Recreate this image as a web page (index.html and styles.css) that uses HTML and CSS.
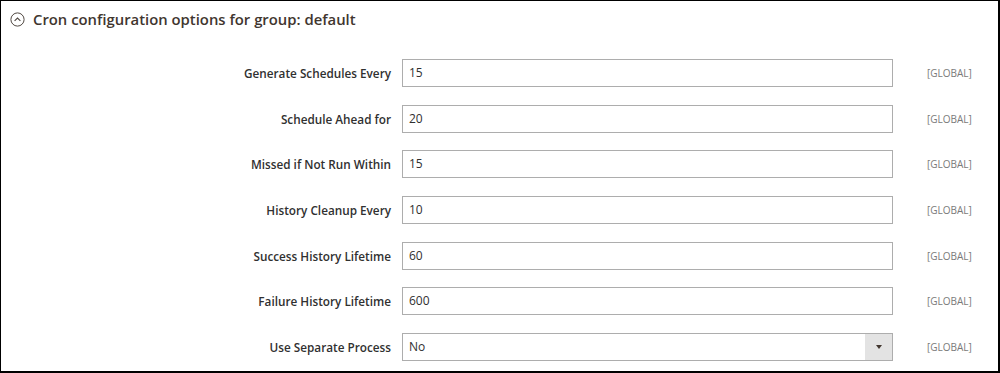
FILE: index.html
```html
<!DOCTYPE html>
<html>
<head>
<meta charset="utf-8">
<link rel="stylesheet" href="styles.css">
</head>
<body>
<div class="frame">
  <div class="section-head">
    <svg class="toggle" width="15" height="15" viewBox="0 0 15 15">
      <circle cx="7.5" cy="7.5" r="6.6" fill="none" stroke="#514943" stroke-width="1"/>
      <path d="M4.6 8.9 L7.5 6 L10.4 8.9" fill="none" stroke="#514943" stroke-width="1.1"/>
    </svg>
    <span class="title">Cron configuration options for group: default</span>
  </div>
  <div class="form">
    <div class="row">
      <label class="label">Generate Schedules Every</label>
      <div class="control"><div class="input">15</div></div>
      <div class="scope">[GLOBAL]</div>
    </div>
    <div class="row">
      <label class="label">Schedule Ahead for</label>
      <div class="control"><div class="input">20</div></div>
      <div class="scope">[GLOBAL]</div>
    </div>
    <div class="row">
      <label class="label">Missed if Not Run Within</label>
      <div class="control"><div class="input">15</div></div>
      <div class="scope">[GLOBAL]</div>
    </div>
    <div class="row">
      <label class="label">History Cleanup Every</label>
      <div class="control"><div class="input">10</div></div>
      <div class="scope">[GLOBAL]</div>
    </div>
    <div class="row">
      <label class="label">Success History Lifetime</label>
      <div class="control"><div class="input">60</div></div>
      <div class="scope">[GLOBAL]</div>
    </div>
    <div class="row">
      <label class="label">Failure History Lifetime</label>
      <div class="control"><div class="input">600</div></div>
      <div class="scope">[GLOBAL]</div>
    </div>
    <div class="row">
      <label class="label">Use Separate Process</label>
      <div class="control">
        <div class="input select"><span class="select-value">No</span><span class="arrow"><span class="tri"></span></span></div>
      </div>
      <div class="scope">[GLOBAL]</div>
    </div>
  </div>
</div>
</body>
</html>
```
FILE: styles.css
```css
html, body {
  margin: 0;
  padding: 0;
  background: #fff;
}
body {
  font-family: "Open Sans", "Liberation Sans", sans-serif;
  color: #303030;
}
.frame {
  box-sizing: border-box;
  width: 1000px;
  height: 373px;
  border-top: 1px solid #000;
  border-left: 1px solid #000;
  border-right: 2px solid #000;
  border-bottom: 2px solid #000;
  background: #fff;
  overflow: hidden;
}
.section-head {
  display: flex;
  align-items: center;
  height: 35px;
  padding-left: 9px;
  gap: 8px;
}
.toggle {
  display: block;
  margin-top: 2px;
}
.title {
  font-size: 14.85px;
  font-weight: 600;
  color: #41362f;
}
.form {
  display: flex;
  flex-direction: column;
  gap: 17.66px;
  margin-top: 23px;
}
.row {
  display: grid;
  grid-template-columns: 390px 491px auto;
  column-gap: 11px;
  align-items: center;
  height: 28px;
}
.label {
  text-align: right;
  font-size: 11.75px;
  font-weight: 600;
  color: #303030;
}
.control {
  height: 28px;
}
.input {
  box-sizing: border-box;
  height: 28px;
  border: 1px solid #adadad;
  padding: 0 6px;
  font-size: 12px;
  line-height: 26px;
  color: #303030;
  background: #fff;
}
.select {
  display: flex;
  padding: 0 0 0 6px;
}
.select-value {
  flex: 1;
}
.arrow {
  width: 27px;
  height: 26px;
  background: #e3e3e3;
  display: flex;
  align-items: center;
  justify-content: center;
}
.tri {
  width: 0;
  height: 0;
  border-left: 3.5px solid transparent;
  border-right: 3.5px solid transparent;
  border-top: 4px solid #41362f;
  margin-top: 1px;
}
.scope {
  padding-left: 23px;
  font-size: 10px;
  color: #7a7a7a;
}
```
